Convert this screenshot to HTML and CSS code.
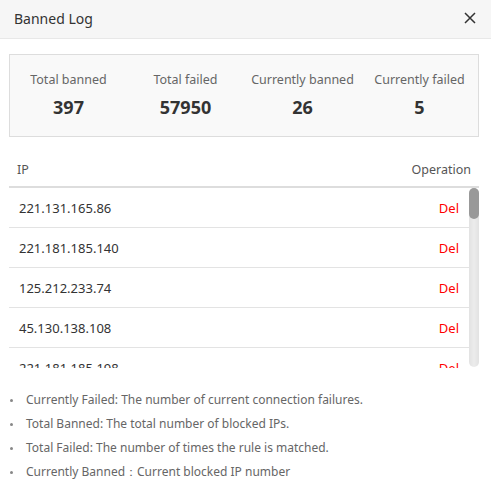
FILE: index.html
```html
<!DOCTYPE html>
<html lang="en">
<head>
<meta charset="utf-8">
<title>Banned Log</title>
<link rel="stylesheet" href="styles.css">
</head>
<body>
<div class="modal">
  <div class="modal-header">
    <span class="modal-title">Banned Log</span>
    <button class="close" aria-label="Close">
      <svg width="12" height="12" viewBox="0 0 12 12"><path d="M1 1L11 11M11 1L1 11" stroke="#333" stroke-width="1.5" fill="none"/></svg>
    </button>
  </div>
  <div class="modal-body">
    <div class="stats">
      <div class="stat"><div class="stat-label">Total banned</div><div class="stat-value">397</div></div>
      <div class="stat"><div class="stat-label">Total failed</div><div class="stat-value">57950</div></div>
      <div class="stat"><div class="stat-label">Currently banned</div><div class="stat-value">26</div></div>
      <div class="stat"><div class="stat-label">Currently failed</div><div class="stat-value">5</div></div>
    </div>
    <div class="table">
      <div class="thead">
        <span>IP</span>
        <span>Operation</span>
      </div>
      <div class="tbody-wrap">
        <div class="tbody">
          <div class="row"><span>221.131.165.86</span><a class="del">Del</a></div>
          <div class="row"><span>221.181.185.140</span><a class="del">Del</a></div>
          <div class="row"><span>125.212.233.74</span><a class="del">Del</a></div>
          <div class="row"><span>45.130.138.108</span><a class="del">Del</a></div>
          <div class="row"><span>221.181.185.198</span><a class="del">Del</a></div>
          <div class="row"><span>61.177.172.13</span><a class="del">Del</a></div>
          <div class="row"><span>222.186.30.112</span><a class="del">Del</a></div>
          <div class="row"><span>218.92.0.190</span><a class="del">Del</a></div>
          <div class="row"><span>112.85.42.87</span><a class="del">Del</a></div>
          <div class="row"><span>49.88.112.77</span><a class="del">Del</a></div>
          <div class="row"><span>221.131.165.23</span><a class="del">Del</a></div>
          <div class="row"><span>141.98.10.60</span><a class="del">Del</a></div>
          <div class="row"><span>193.142.146.212</span><a class="del">Del</a></div>
          <div class="row"><span>45.135.232.165</span><a class="del">Del</a></div>
          <div class="row"><span>92.63.197.95</span><a class="del">Del</a></div>
          <div class="row"><span>185.156.74.65</span><a class="del">Del</a></div>
          <div class="row"><span>221.181.185.19</span><a class="del">Del</a></div>
          <div class="row"><span>103.99.0.122</span><a class="del">Del</a></div>
          <div class="row"><span>122.194.229.45</span><a class="del">Del</a></div>
          <div class="row"><span>5.188.206.204</span><a class="del">Del</a></div>
          <div class="row"><span>212.70.149.83</span><a class="del">Del</a></div>
          <div class="row"><span>89.248.165.2</span><a class="del">Del</a></div>
          <div class="row"><span>61.177.173.36</span><a class="del">Del</a></div>
          <div class="row"><span>218.93.208.150</span><a class="del">Del</a></div>
          <div class="row"><span>183.136.225.42</span><a class="del">Del</a></div>
          <div class="row"><span>36.110.228.254</span><a class="del">Del</a></div>
        </div>
        <div class="scrollbar"><div class="thumb"></div></div>
      </div>
    </div>
    <ul class="notes">
      <li>Currently Failed: The number of current connection failures.</li>
      <li>Total Banned: The total number of blocked IPs.</li>
      <li>Total Failed: The number of times the rule is matched.</li>
      <li>Currently Banned：Current blocked IP number</li>
    </ul>
  </div>
</div>
</body>
</html>
```
FILE: styles.css
```css
html, body {
  margin: 0;
  padding: 0;
  background: #fff;
  font-family: "Noto Sans", "Open Sans", sans-serif;
  color: #333;
}
.modal {
  width: 491px;
  height: 498px;
  overflow: hidden;
  background: #fff;
}
.modal-header {
  box-sizing: border-box;
  height: 39px;
  display: flex;
  align-items: center;
  justify-content: space-between;
  padding: 0 15px 2px 14px;
  background: #f6f6f6;
  border-bottom: 1px solid #e8e8e8;
}
.modal-title {
  font-size: 14px;
  color: #333;
}
.close {
  border: 0;
  background: transparent;
  padding: 0;
  width: 12px;
  height: 12px;
  display: flex;
  cursor: pointer;
}
.modal-body {
  padding: 15px 12px 0 9px;
}
.stats {
  display: grid;
  grid-template-columns: repeat(4, 1fr);
  height: 83px;
  box-sizing: border-box;
  border: 1px solid #ddd;
  background: #f9f9f9;
  padding-top: 16px;
}
.stat {
  text-align: center;
}
.stat-label {
  font-size: 12.5px;
  color: #666;
  line-height: 18px;
}
.stat-value {
  font-size: 18px;
  font-weight: bold;
  color: #333;
  line-height: 24px;
  margin-top: 6px;
}
.table {
  margin-top: 15px;
}
.thead {
  display: flex;
  justify-content: space-between;
  height: 34px;
  align-items: center;
  padding: 0 8px 0 8px;
  font-size: 12.5px;
  color: #555;
  border-bottom: 2px solid #ddd;
}
.tbody-wrap {
  position: relative;
  height: 180px;
}
.tbody {
  height: 180px;
  overflow: hidden;
  margin-right: 10px;
}
.scrollbar {
  position: absolute;
  top: 0;
  right: 0;
  width: 10px;
  height: 179px;
  background: linear-gradient(to right, #e2e2e2, #ececec 50%, #e2e2e2);
  border-radius: 5px;
}
.thumb {
  width: 10px;
  height: 31px;
  background: #999;
  border-radius: 5px;
}
.row {
  display: flex;
  justify-content: space-between;
  align-items: center;
  height: 39px;
  border-bottom: 1px solid #e3e3e3;
  padding: 0 10px;
  font-size: 13px;
  color: #333;
}
.del {
  color: #f00;
  cursor: pointer;
}
.notes {
  list-style: none;
  margin: 20px 0 0;
  padding: 0 0 0 17px;
}
.notes li {
  position: relative;
  font-size: 12px;
  color: #666;
  line-height: 24px;
}
.notes li::before {
  content: "";
  position: absolute;
  left: -16px;
  top: 11px;
  width: 3px;
  height: 3px;
  border-radius: 50%;
  background: #888;
}
```
